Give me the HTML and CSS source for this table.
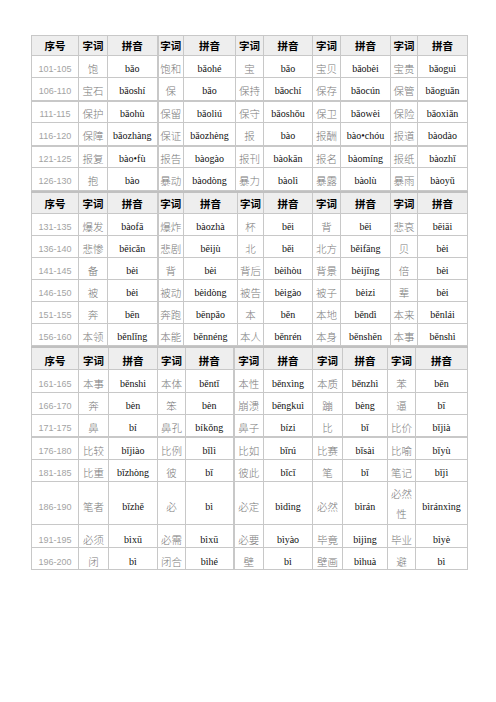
FILE: index.html
```html
<!DOCTYPE html>
<html lang="zh">
<head>
<meta charset="utf-8">
<title>拼音表</title>
<link rel="stylesheet" href="styles.css">
</head>
<body>
<div class="page">
  <table class="grid b1">
    <colgroup>
      <col class="w47"><col class="w29"><col class="w50"><col class="w26"><col class="w52"><col class="w28"><col class="w49"><col class="w28"><col class="w50"><col class="w27"><col class="w50">
    </colgroup>
    <tr class="head"><th>序号</th><th>字词</th><th>拼音</th><th class="thick-l">字词</th><th>拼音</th><th>字词</th><th>拼音</th><th>字词</th><th>拼音</th><th>字词</th><th>拼音</th></tr>
    <tr class="h22"><td class="no">101-105</td><td class="zi">饱</td><td class="py">bǎo</td><td class="zi thick-l">饱和</td><td class="py">bǎohé</td><td class="zi">宝</td><td class="py">bǎo</td><td class="zi">宝贝</td><td class="py">bǎobèi</td><td class="zi">宝贵</td><td class="py">bǎoguì</td></tr>
    <tr class="h23 thick-b"><td class="no">106-110</td><td class="zi">宝石</td><td class="py">bǎoshí</td><td class="zi thick-l">保</td><td class="py">bǎo</td><td class="zi">保持</td><td class="py">bǎochí</td><td class="zi">保存</td><td class="py">bǎocún</td><td class="zi">保管</td><td class="py">bǎoguǎn</td></tr>
    <tr class="h22"><td class="no">111-115</td><td class="zi">保护</td><td class="py">bǎohù</td><td class="zi thick-l">保留</td><td class="py">bǎoliú</td><td class="zi">保守</td><td class="py">bǎoshǒu</td><td class="zi">保卫</td><td class="py">bǎowèi</td><td class="zi">保险</td><td class="py">bǎoxiǎn</td></tr>
    <tr class="h23 thick-b"><td class="no">116-120</td><td class="zi">保障</td><td class="py">bǎozhàng</td><td class="zi thick-l">保证</td><td class="py">bǎozhèng</td><td class="zi">报</td><td class="py">bào</td><td class="zi">报酬</td><td class="py">bào•chóu</td><td class="zi">报道</td><td class="py">bàodào</td></tr>
    <tr class="h22"><td class="no">121-125</td><td class="zi">报复</td><td class="py">bào•fù</td><td class="zi thick-l">报告</td><td class="py">bàogào</td><td class="zi">报刊</td><td class="py">bàokān</td><td class="zi">报名</td><td class="py">bàomíng</td><td class="zi">报纸</td><td class="py">bàozhǐ</td></tr>
    <tr class="h23"><td class="no">126-130</td><td class="zi">抱</td><td class="py">bào</td><td class="zi thick-l">暴动</td><td class="py">bàodòng</td><td class="zi">暴力</td><td class="py">bàolì</td><td class="zi">暴露</td><td class="py">bàolù</td><td class="zi">暴雨</td><td class="py">bàoyǔ</td></tr>
  </table>

  <table class="grid b2">
    <colgroup>
      <col class="w47"><col class="w29"><col class="w50"><col class="w26"><col class="w54"><col class="w26"><col class="w49"><col class="w28"><col class="w50"><col class="w27"><col class="w50">
    </colgroup>
    <tr class="head"><th>序号</th><th>字词</th><th>拼音</th><th class="thick-l">字词</th><th>拼音</th><th>字词</th><th>拼音</th><th>字词</th><th>拼音</th><th>字词</th><th>拼音</th></tr>
    <tr class="h22"><td class="no">131-135</td><td class="zi">爆发</td><td class="py">bàofā</td><td class="zi thick-l">爆炸</td><td class="py">bàozhà</td><td class="zi">杯</td><td class="py">bēi</td><td class="zi">背</td><td class="py">bēi</td><td class="zi">悲哀</td><td class="py">bēiāi</td></tr>
    <tr class="h22"><td class="no">136-140</td><td class="zi">悲惨</td><td class="py">bēicǎn</td><td class="zi thick-l">悲剧</td><td class="py">bēijù</td><td class="zi">北</td><td class="py">běi</td><td class="zi">北方</td><td class="py">běifāng</td><td class="zi">贝</td><td class="py">bèi</td></tr>
    <tr class="h22"><td class="no">141-145</td><td class="zi">备</td><td class="py">bèi</td><td class="zi thick-l">背</td><td class="py">bèi</td><td class="zi">背后</td><td class="py">bèihòu</td><td class="zi">背景</td><td class="py">bèijǐng</td><td class="zi">倍</td><td class="py">bèi</td></tr>
    <tr class="h22"><td class="no">146-150</td><td class="zi">被</td><td class="py">bèi</td><td class="zi thick-l">被动</td><td class="py">bèidòng</td><td class="zi">被告</td><td class="py">bèigào</td><td class="zi">被子</td><td class="py">bèizi</td><td class="zi">辈</td><td class="py">bèi</td></tr>
    <tr class="h22"><td class="no">151-155</td><td class="zi">奔</td><td class="py">bēn</td><td class="zi thick-l">奔跑</td><td class="py">bēnpǎo</td><td class="zi">本</td><td class="py">běn</td><td class="zi">本地</td><td class="py">běndì</td><td class="zi">本来</td><td class="py">běnlái</td></tr>
    <tr class="h22"><td class="no">156-160</td><td class="zi">本领</td><td class="py">běnlǐng</td><td class="zi thick-l">本能</td><td class="py">běnnéng</td><td class="zi">本人</td><td class="py">běnrén</td><td class="zi">本身</td><td class="py">běnshēn</td><td class="zi">本事</td><td class="py">běnshì</td></tr>
  </table>

  <table class="grid b3">
    <colgroup>
      <col class="w47"><col class="w30"><col class="w49"><col class="w28"><col class="w48"><col class="w30"><col class="w49"><col class="w30"><col class="w45"><col class="w28"><col class="w52">
    </colgroup>
    <tr class="head"><th>序号</th><th>字词</th><th>拼音</th><th>字词</th><th>拼音</th><th class="thick-l">字词</th><th>拼音</th><th>字词</th><th>拼音</th><th>字词</th><th>拼音</th></tr>
    <tr class="h23"><td class="no">161-165</td><td class="zi">本事</td><td class="py">běnshi</td><td class="zi">本体</td><td class="py">běntǐ</td><td class="zi thick-l">本性</td><td class="py">běnxìng</td><td class="zi">本质</td><td class="py">běnzhì</td><td class="zi">苯</td><td class="py">běn</td></tr>
    <tr class="h22"><td class="no">166-170</td><td class="zi">奔</td><td class="py">bèn</td><td class="zi">笨</td><td class="py">bèn</td><td class="zi thick-l">崩溃</td><td class="py">bēngkuì</td><td class="zi">蹦</td><td class="py">bèng</td><td class="zi">逼</td><td class="py">bī</td></tr>
    <tr class="h22 thick-b"><td class="no">171-175</td><td class="zi">鼻</td><td class="py">bí</td><td class="zi">鼻孔</td><td class="py">bíkǒng</td><td class="zi thick-l">鼻子</td><td class="py">bízi</td><td class="zi">比</td><td class="py">bǐ</td><td class="zi">比价</td><td class="py">bǐjià</td></tr>
    <tr class="h23"><td class="no">176-180</td><td class="zi">比较</td><td class="py">bǐjiào</td><td class="zi">比例</td><td class="py">bǐlì</td><td class="zi thick-l">比如</td><td class="py">bǐrú</td><td class="zi">比赛</td><td class="py">bǐsài</td><td class="zi">比喻</td><td class="py">bǐyù</td></tr>
    <tr class="h22"><td class="no">181-185</td><td class="zi">比重</td><td class="py">bǐzhòng</td><td class="zi">彼</td><td class="py">bǐ</td><td class="zi thick-l">彼此</td><td class="py">bǐcǐ</td><td class="zi">笔</td><td class="py">bǐ</td><td class="zi">笔记</td><td class="py">bǐjì</td></tr>
    <tr class="h43"><td class="no">186-190</td><td class="zi">笔者</td><td class="py">bǐzhě</td><td class="zi">必</td><td class="py">bì</td><td class="zi thick-l">必定</td><td class="py">bìdìng</td><td class="zi">必然</td><td class="py">bìrán</td><td class="zi wrap">必然性</td><td class="py">bìránxìng</td></tr>
    <tr class="h23 low"><td class="no">191-195</td><td class="zi">必须</td><td class="py">bìxū</td><td class="zi">必需</td><td class="py">bìxū</td><td class="zi thick-l">必要</td><td class="py">bìyào</td><td class="zi">毕竟</td><td class="py">bìjìng</td><td class="zi">毕业</td><td class="py">bìyè</td></tr>
    <tr class="h22 last"><td class="no">196-200</td><td class="zi">闭</td><td class="py">bì</td><td class="zi">闭合</td><td class="py">bìhé</td><td class="zi thick-l">壁</td><td class="py">bì</td><td class="zi">壁画</td><td class="py">bìhuà</td><td class="zi">避</td><td class="py">bì</td></tr>
  </table>
</div>
</body>
</html>
```
FILE: styles.css
```css
html, body {
  margin: 0;
  padding: 0;
  background: #ffffff;
}

.page {
  padding: 35px 0 0 31px;
}

.grid {
  border-collapse: collapse;
  table-layout: fixed;
  width: 436px;
}

.grid th,
.grid td {
  border: 1px solid #c8c8c8;
  padding: 4px 1px 0;
  text-align: center;
  vertical-align: middle;
  line-height: 14px;
  overflow: hidden;
}

.grid th {
  background: #eeeeee;
  color: #000000;
  font-family: "Noto Sans CJK SC", sans-serif;
  font-weight: 700;
  font-size: 10.5px;
  padding-top: 1px;
}

.b1 tr.head { height: 20px; }
.b2 tr.head { height: 21px; }
.b3 tr.head { height: 23px; }

.b2 th {
  padding-top: 3px;
  border-top: 2px solid #c0c0c0;
}

.b3 th {
  padding-top: 5px;
  border-top: 2px solid #c0c0c0;
}

.b2 td { padding-top: 6px; }
.b3 td { padding-top: 5px; }
.b3 tr.h43 td { padding-top: 8px; }
.b3 tr.low td { padding-top: 8px; }
.b3 tr.last td { padding-top: 6px; }

.grid tr.h22 { height: 22px; }
.grid tr.h23 { height: 23px; }
.grid tr.h43 { height: 43px; }

.grid td.no {
  color: #a3a3a3;
  font-family: "Liberation Sans", Arial, sans-serif;
  font-size: 9px;
}

.grid td.zi {
  color: #7a7a7a;
  font-family: "Noto Sans CJK SC", sans-serif;
  font-size: 10.5px;
  font-weight: 300;
}

.b3 tr.h43 td.zi.wrap {
  line-height: 20px;
  padding: 2px 2px 0;
}

.grid td.py {
  color: #111111;
  font-family: "Liberation Serif", "Times New Roman", serif;
  font-size: 10px;
  white-space: nowrap;
}

.grid .thick-b td {
  border-bottom: 2px solid #c8c8c8;
}

.grid .thick-l {
  border-left: 2px solid #c8c8c8;
}

.w26 { width: 26px; }
.w27 { width: 27px; }
.w28 { width: 28px; }
.w29 { width: 29px; }
.w30 { width: 30px; }
.w45 { width: 45px; }
.w47 { width: 47px; }
.w48 { width: 48px; }
.w49 { width: 49px; }
.w50 { width: 50px; }
.w52 { width: 52px; }
.w54 { width: 54px; }
```
